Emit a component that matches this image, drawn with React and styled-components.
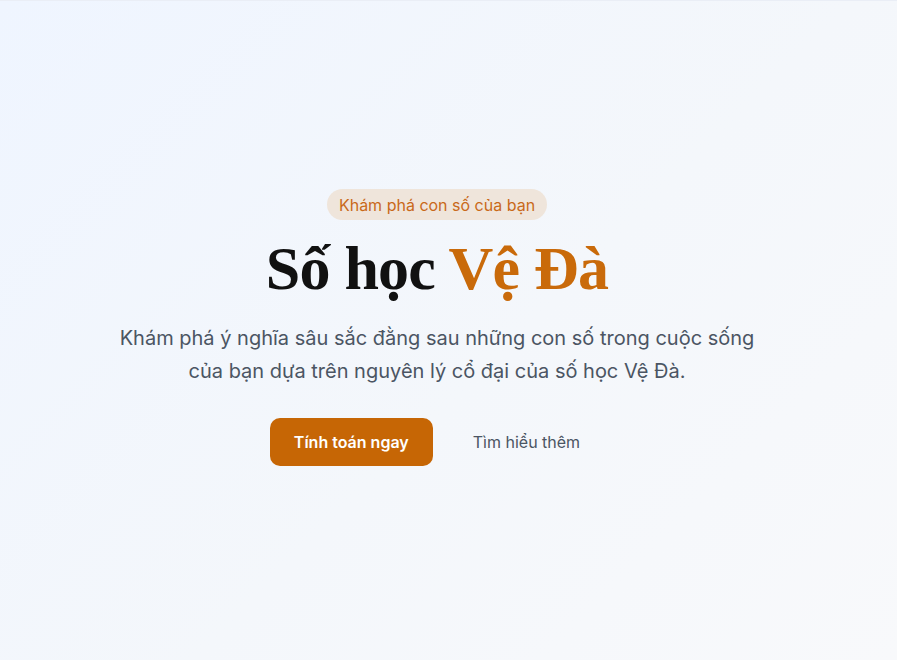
import React from "react";
import styled, { createGlobalStyle } from "styled-components";

const Global = createGlobalStyle`
  html, body { margin: 0; padding: 0; }
  body { font-family: Inter, "Noto Sans", sans-serif; }
  * { box-sizing: border-box; }
`;

const Page = styled.main`
  min-height: 660px;
  display: flex;
  align-items: center;
  justify-content: center;
  padding: 0 23px 6px 0;
  background: linear-gradient(135deg, #eff5ff 0%, #f4f7fb 55%, #f8f9fb 100%);
  border-top: 1px solid #eaeef6;
`;

const Hero = styled.section`
  display: flex;
  flex-direction: column;
  align-items: center;
  text-align: center;
  max-width: 672px;
`;

const Badge = styled.span`
  display: inline-block;
  padding: 3.5px 12px;
  border-radius: 999px;
  background: #efe5db;
  color: #c9691a;
  font-size: 16px;
  line-height: 24px;
`;

const Title = styled.h1`
  margin: 12px 0 0;
  font-family: "Liberation Serif", "DejaVu Serif", serif;
  font-weight: 700;
  font-size: 62px;
  line-height: 72px;
  color: #111111;
  letter-spacing: -0.8px;
`;

const Accent = styled.span`
  color: #c96a0a;
`;

const Lead = styled.p`
  margin: 18px 0 0;
  font-size: 20px;
  line-height: 33px;
  color: #4b5563;
`;

const Actions = styled.div`
  display: flex;
  gap: 16px;
  margin-top: 30px;
`;

const Button = styled.button`
  font-family: Inter, sans-serif;
  font-size: 16px;
  line-height: 24px;
  padding: 12px 24px;
  border-radius: 10px;
  border: none;
  cursor: pointer;
  font-weight: ${(p) => (p.$primary ? 600 : 400)};
  background: ${(p) => (p.$primary ? "#c66605" : "transparent")};
  color: ${(p) => (p.$primary ? "#ffffff" : "#4b5563")};
`;

export default function App() {
  return (
    <>
      <Global />
      <Page>
        <Hero>
          <Badge>Khám phá con số của bạn</Badge>
          <Title>
            Số học <Accent>Vệ Đà</Accent>
          </Title>
          <Lead>
            Khám phá ý nghĩa sâu sắc đằng sau những con số trong cuộc sống của bạn dựa trên nguyên lý cổ đại của số học Vệ Đà.
          </Lead>
          <Actions>
            <Button $primary>Tính toán ngay</Button>
            <Button>Tìm hiểu thêm</Button>
          </Actions>
        </Hero>
      </Page>
    </>
  );
}
